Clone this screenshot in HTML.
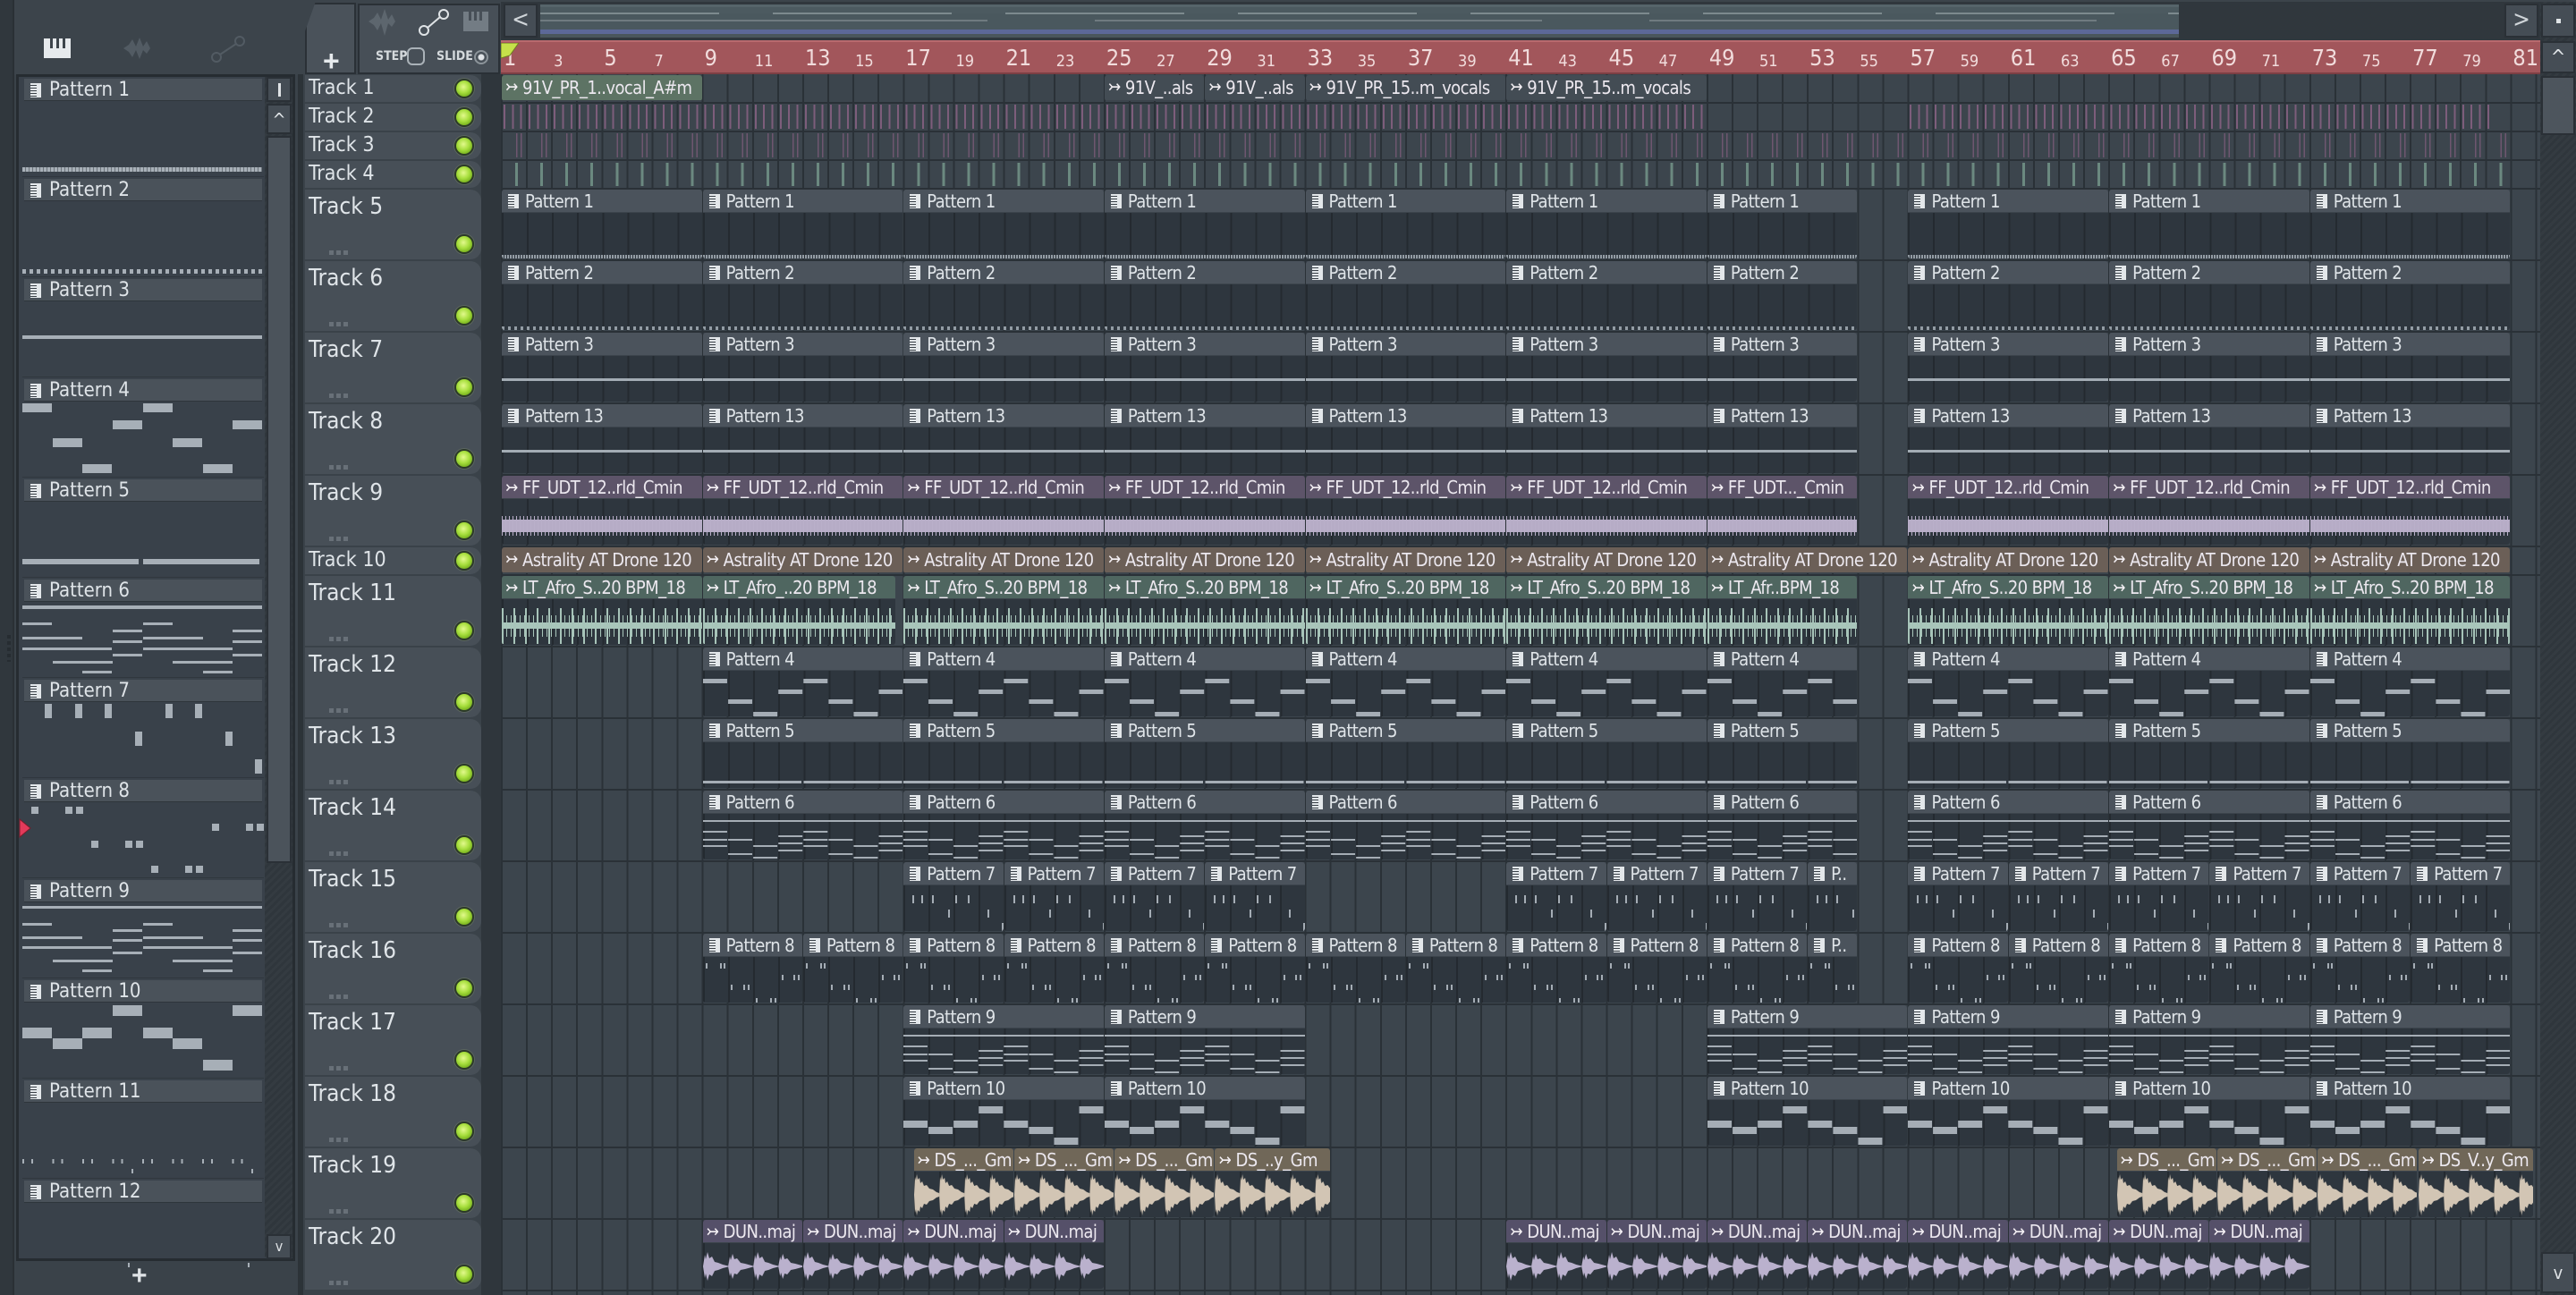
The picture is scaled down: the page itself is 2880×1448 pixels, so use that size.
<!DOCTYPE html>
<html><head><meta charset="utf-8">
<style>
*{box-sizing:border-box}
body{margin:0;width:2880px;height:1448px;overflow:hidden;background:#3a4249;position:relative;font-family:"Liberation Sans Narrow","DejaVu Sans Condensed","Liberation Sans",sans-serif;font-stretch:condensed;color:#dfe4e8}
.a0{position:absolute}
#top{position:absolute;left:0;top:0;width:2880px;height:84px;background:#3c444b}
#lstrip{position:absolute;left:0;top:0;width:16px;height:1448px;background:#30373d;border-right:2px solid #2a3035}
#plist{position:absolute;left:18px;top:83px;width:312px;height:1327px;background:#39414a;border:3px solid #262c31}
.ph{position:absolute;left:6px;width:266px;height:25px;background:#4a525a;border-bottom:1px solid #2e353b;font-size:22px;line-height:25px;padding-left:28px;color:#dfe4e8;white-space:nowrap}
.ph::before,.h::before{content:"";position:absolute;left:7px;top:5px;width:12px;height:16px;background:#e3e7ea;background-image:repeating-linear-gradient(180deg,transparent 0 2px,#3a4148 2px 3px);background-size:7px 100%;background-repeat:no-repeat}
.pv{position:absolute;left:4px;width:270px;height:84px;border-bottom:1px solid #30373e}
.pv i{position:absolute;background:#a7afb7;display:block}
#sb{position:absolute;left:296px;top:86px;width:31px;height:1320px;background:repeating-linear-gradient(135deg,#2f363c 0 3px,#343b41 3px 6px)}
.tr{position:absolute;left:341px;width:197px;background:#474f57;border-radius:0 12px 12px 0;font-size:23px;line-height:28px;padding-left:4px;white-space:nowrap}
.tr.t{font-size:26px;line-height:34px;padding-top:2px}
.led{position:absolute;right:8px;width:22px;height:22px;border-radius:50%;background:radial-gradient(circle at 45% 40%,#e2f98c 0,#a6de3c 45%,#6aa416 85%);border:2px solid #2c3a28;box-shadow:0 0 0 1px #5c6660}
.dots{position:absolute;left:27px;top:68px;width:21px;height:5px;background:repeating-linear-gradient(90deg,#687078 0 5px,transparent 5px 8px)}
#pl{position:absolute;left:560px;top:83px;width:2280px;height:1365px;overflow:hidden;background:repeating-linear-gradient(90deg,#2a3137 0 2px,#3c454d 2px 28.08px)}
.rw{position:absolute;left:0;width:2280px;height:2px;background:#2a3137}
.c{position:absolute;left:calc(var(--b)*28.08px + 1px);width:calc(var(--w)*28.08px - 1px);border-radius:3px;overflow:hidden;background-color:#2e363e;--g:repeating-linear-gradient(90deg,#242a30 0 2px,transparent 2px 28.08px);background-image:var(--g)}
.h{position:relative;height:26px;background:#4b535c;color:#dfe4e8;font-size:20px;letter-spacing:-0.6px;line-height:26px;white-space:nowrap;overflow:hidden;padding-left:26px;border-bottom:1px solid #3c444c}
.a .h::before{content:"\21A3";background:none;color:#f4f0f4;font-size:19px;line-height:24px;top:1px;left:4px;width:auto;height:auto}
.a .h{padding-left:23px;color:#ece8ef}
.s{height:29px}.s .h{height:29px;line-height:29px}
.y1{top:1px}.y10{top:529px}
.y5{top:129px}.y6{top:209px}.y7{top:289px}.y8{top:369px}.y9{top:449px}.y11{top:561px}.y12{top:641px}.y13{top:721px}.y14{top:801px}.y15{top:881px}.y16{top:961px}.y17{top:1041px}.y18{top:1121px}.y19{top:1201px}.y20{top:1281px}
.y5,.y6,.y7,.y8,.y9,.y11,.y12,.y13,.y14,.y15,.y16,.y17,.y18,.y19,.y20{height:77px}
.gr .h{background:#5d7364}.dk .h{background:#434c54}
.pu .h{background:#5d5469}.br .h{background:#6b5f57}.tl .h{background:#4f6660}.bg .h{background:#706758}.lv .h{background:#555069}
.p1{background-image:repeating-linear-gradient(90deg,#939ca4 0 2px,transparent 2px 3px),var(--g);background-size:100% 4px,auto;background-position:0 73px,0 0;background-repeat:no-repeat,repeat}
.p2{background-image:repeating-linear-gradient(90deg,#939ca4 0 3px,transparent 3px 7px),var(--g);background-size:100% 4px,auto;background-position:0 73px,0 0;background-repeat:no-repeat,repeat}
.p3,.p13{background-image:linear-gradient(#a3acb4,#a3acb4),var(--g);background-size:100% 3px,auto;background-position:0 51px,0 0;background-repeat:no-repeat,repeat}
.p4{--L:linear-gradient(90deg,#a5adb5 0 27px,transparent 27px);background-image:var(--L),var(--L),var(--L),var(--L),var(--g);background-size:112.32px 5px,112.32px 5px,112.32px 5px,112.32px 5px,auto;background-position:0 35px,28.08px 58px,56.16px 72px,84.24px 47px,0 0;background-repeat:repeat-x,repeat-x,repeat-x,repeat-x,repeat}
.p5{background-image:repeating-linear-gradient(90deg,#a5adb5 0 110px,transparent 110px 112.32px),var(--g);background-size:100% 3px,auto;background-position:0 69px,0 0;background-repeat:no-repeat,repeat}
.p6,.p9{--L:linear-gradient(90deg,#a5adb5 0 27px,transparent 27px);background-image:linear-gradient(#a5adb5,#a5adb5),var(--L),var(--L),var(--L),var(--L),var(--L),var(--L),var(--L),var(--L),var(--L),var(--L),var(--g);background-size:100% 2px,112.32px 2px,112.32px 2px,112.32px 2px,112.32px 2px,112.32px 2px,112.32px 2px,112.32px 2px,112.32px 2px,112.32px 2px,112.32px 2px,auto;background-position:0 33px,0 45px,0 54px,0 61px,28.08px 54px,28.08px 70px,56.16px 61px,56.16px 74px,84.24px 50px,84.24px 58px,84.24px 66px,0 0;background-repeat:no-repeat,repeat-x,repeat-x,repeat-x,repeat-x,repeat-x,repeat-x,repeat-x,repeat-x,repeat-x,repeat-x,repeat}
.p10{--L:linear-gradient(90deg,#a5adb5 0 27px,transparent 27px);background-image:var(--L),var(--L),var(--L),var(--L),var(--L),var(--L),var(--L),var(--L),var(--g);background-size:224.64px 8px,224.64px 8px,224.64px 8px,224.64px 8px,224.64px 8px,224.64px 8px,224.64px 8px,224.64px 8px,auto;background-position:0 49px,28.08px 56px,56.16px 49px,84.24px 33px,112.32px 49px,140.4px 56px,168.48px 68px,196.56px 33px,0 0;background-repeat:repeat-x,repeat-x,repeat-x,repeat-x,repeat-x,repeat-x,repeat-x,repeat-x,repeat}
.p7{--T:linear-gradient(#a5adb5,#a5adb5);background-image:var(--T),var(--T),var(--T),var(--T),var(--T),var(--T),var(--T),var(--T),var(--g);background-size:2px 9px,2px 9px,2px 9px,2px 9px,2px 9px,2px 9px,2px 9px,2px 9px,auto;background-position:10px 37px,20px 37px,32px 37px,58px 37px,72px 37px,50px 53px,94px 53px,110px 68px,0 0;background-repeat:no-repeat,no-repeat,no-repeat,no-repeat,no-repeat,no-repeat,no-repeat,no-repeat,repeat}
.p8{--T:linear-gradient(#a5adb5,#a5adb5);background-image:var(--T),var(--T),var(--T),var(--T),var(--T),var(--T),var(--T),var(--T),var(--T),var(--T),var(--T),var(--T),var(--g);background-size:2px 6px,2px 6px,2px 6px,2px 6px,2px 6px,2px 6px,2px 6px,2px 6px,2px 6px,2px 6px,2px 6px,2px 6px,auto;background-position:3px 33px,19px 33px,23px 33px,31px 57px,45px 57px,50px 57px,59px 72px,75px 72px,80px 72px,88px 46px,101px 46px,106px 46px,0 0;background-repeat:no-repeat,no-repeat,no-repeat,no-repeat,no-repeat,no-repeat,no-repeat,no-repeat,no-repeat,no-repeat,no-repeat,no-repeat,repeat}
.wpu{background-image:repeating-linear-gradient(90deg,#b9afc9 0 1px,transparent 1px 4px),linear-gradient(#b6acc6,#b6acc6),var(--g);background-size:100% 22px,100% 14px,auto;background-position:0 45px,0 49px,0 0;background-repeat:no-repeat,no-repeat,repeat}
.wtl{background-image:repeating-linear-gradient(90deg,#a7c4b9 0 2px,transparent 2px 13px),repeating-linear-gradient(90deg,#a7c4b9 0 1px,transparent 1px 5px),linear-gradient(#a9c6bb,#a9c6bb),var(--g);background-size:100% 40px,100% 24px,100% 7px,auto;background-position:0 36px,0 44px,0 52px,0 0;background-repeat:no-repeat,no-repeat,no-repeat,repeat}
.wv{position:absolute;left:0;top:27px}
.rn{position:absolute;top:0;left:calc(var(--n)*56.16px + 3px);font-size:18px;line-height:36px;color:#f1dcdc;padding-top:4px}
.rn.b{font-size:25px;padding-top:0}
</style></head><body>
<svg width="0" height="0" style="position:absolute"><defs>
<pattern id="ds" width="28.08" height="50" patternUnits="userSpaceOnUse"><path d="M0 25 L1 5 L2 9 L3 2 L4 8 L6 6 L7 12 L9 10 L11 15 L14 14 L17 18 L21 19 L25 22 L28 23 L28 27 L25 28 L21 31 L17 32 L14 36 L11 35 L9 40 L7 38 L6 44 L4 42 L3 48 L2 41 L1 45 Z" fill="#d2c5b4"/></pattern>
<pattern id="dun" width="56.16" height="50" patternUnits="userSpaceOnUse"><path d="M0 25 L2 12 L3 17 L5 9 L7 16 L10 14 L13 20 L17 21 L22 23 L28 24.5 L28 25.5 L22 27 L17 29 L13 30 L10 36 L7 34 L5 41 L3 33 L2 38 Z M28 25 L30 14 L31 18 L33 11 L35 17 L38 16 L42 21 L47 22 L56 24.5 L56 25.5 L47 28 L42 29 L38 34 L35 33 L33 39 L31 32 L30 36 Z" fill="#bab1cd"/></pattern>
</defs></svg>

<div id="top"></div>
<div id="lstrip"></div>
<svg class="a0" style="left:46px;top:40px" width="240" height="30">
<rect x="3" y="3" width="30" height="22" fill="#e6eaed"/><rect x="10" y="3" width="3" height="11" fill="#3c444b"/><rect x="17" y="3" width="3" height="11" fill="#3c444b"/><rect x="24" y="3" width="3" height="11" fill="#3c444b"/>
<path d="M92 14 L98 10 L102 4 L106 12 L110 2 L114 12 L118 6 L122 14 L118 20 L114 16 L110 26 L106 16 L102 24 L98 18 Z" fill="#525b63"/>
<circle cx="196" cy="24" r="5" fill="none" stroke="#525b63" stroke-width="2"/><circle cx="222" cy="6" r="5" fill="none" stroke="#525b63" stroke-width="2"/><line x1="200" y1="21" x2="218" y2="9" stroke="#525b63" stroke-width="2"/>
</svg>
<div class="a0" style="left:341px;top:3px;width:57px;height:80px;background:#4a525a;border:2px solid #2a3036;border-radius:12px 0 0 0;clip-path:polygon(20% 0,100% 0,100% 100%,0 100%,0 40%)"></div>
<div class="a0" style="left:361px;top:50px;font-size:32px;font-weight:bold;color:#e6eaed;font-family:'Liberation Sans',sans-serif">+</div>
<div class="a0" style="left:400px;top:4px;width:159px;height:79px;background:#474f57;border:2px solid #2a3036"></div>
<svg class="a0" style="left:408px;top:8px" width="150" height="34">
<path d="M4 16 L10 12 L14 6 L18 14 L22 2 L26 14 L30 8 L34 16 L30 22 L26 18 L22 32 L18 18 L14 26 L10 20 Z" fill="#5d666e"/>
<circle cx="66" cy="26" r="5" fill="none" stroke="#dfe3e6" stroke-width="2"/><circle cx="88" cy="8" r="5" fill="none" stroke="#dfe3e6" stroke-width="2"/><line x1="70" y1="23" x2="84" y2="11" stroke="#dfe3e6" stroke-width="2"/>
<rect x="110" y="5" width="28" height="22" fill="#737c84"/><rect x="116" y="5" width="3" height="10" fill="#474f57"/><rect x="122" y="5" width="3" height="10" fill="#474f57"/><rect x="128" y="5" width="3" height="10" fill="#474f57"/>
</svg>
<div class="a0" style="left:420px;top:55px;font-size:14px;font-weight:bold;color:#d5dadd">STEP</div>
<div class="a0" style="left:455px;top:53px;width:20px;height:20px;border:2px solid #aab2b8;border-radius:6px"></div>
<div class="a0" style="left:488px;top:55px;font-size:14px;font-weight:bold;color:#d5dadd">SLIDE</div>
<div class="a0" style="left:530px;top:56px;width:16px;height:16px;border:2px solid #8c949a;border-radius:50%;background:radial-gradient(circle,#dfe3e6 0 3px,transparent 4px)"></div>
<div class="a0" style="left:560px;top:2px;width:2280px;height:44px;background:#30373d"></div>
<div class="a0" style="left:563px;top:4px;width:38px;height:38px;background:#454d55;border:2px solid #2a3036;font-size:26px;line-height:32px;text-align:center;color:#d0d5d9">&lt;</div>
<div class="a0" style="left:604px;top:5px;width:1832px;height:37px;background:linear-gradient(180deg,#56646a 0 3px,#4c5a60 3px 10px,#4a585e 10px 28px,#5c6898 28px 33px,#4a565c 33px)"></div>
<div class="a0" style="left:604px;top:14px;width:1832px;height:2px;background:repeating-linear-gradient(90deg,#7d8a8e 0 200px,transparent 200px 260px)"></div>
<div class="a0" style="left:604px;top:22px;width:1832px;height:2px;background:repeating-linear-gradient(90deg,#6f7b80 0 500px,transparent 500px 620px)"></div>
<div class="a0" style="left:2800px;top:4px;width:38px;height:38px;background:#454d55;border:2px solid #2a3036;font-size:26px;line-height:32px;text-align:center;color:#d0d5d9">&gt;</div>
<div class="a0" style="left:2840px;top:2px;width:40px;height:1446px;background:repeating-linear-gradient(135deg,#2f363c 0 3px,#343b41 3px 6px)"></div>
<div class="a0" style="left:2841px;top:4px;width:38px;height:38px;background:#454d55;border:2px solid #2a3036"><div class="a0" style="left:15px;top:15px;width:5px;height:5px;background:#dfe3e6"></div></div>
<div class="a0" style="left:2841px;top:46px;width:38px;height:36px;background:#454d55;border:2px solid #2a3036;font-size:22px;line-height:34px;text-align:center;color:#dfe3e6">^</div>
<div class="a0" style="left:2841px;top:85px;width:38px;height:66px;background:#4d555d;border:2px solid #2a3036"></div>
<div class="a0" style="left:2841px;top:1400px;width:38px;height:46px;background:#454d55;border:2px solid #2a3036;font-size:20px;line-height:42px;text-align:center;color:#dfe3e6">v</div>
<div class="a0" style="left:560px;top:45px;width:2280px;height:38px;background:#a2565b;border-top:2px solid #b86a6e;border-bottom:2px solid #7d3f44">
<span class="rn b" style="--n:0">1</span><span class="rn" style="--n:1">3</span><span class="rn b" style="--n:2">5</span><span class="rn" style="--n:3">7</span><span class="rn b" style="--n:4">9</span><span class="rn" style="--n:5">11</span><span class="rn b" style="--n:6">13</span><span class="rn" style="--n:7">15</span><span class="rn b" style="--n:8">17</span><span class="rn" style="--n:9">19</span><span class="rn b" style="--n:10">21</span><span class="rn" style="--n:11">23</span><span class="rn b" style="--n:12">25</span><span class="rn" style="--n:13">27</span><span class="rn b" style="--n:14">29</span><span class="rn" style="--n:15">31</span><span class="rn b" style="--n:16">33</span><span class="rn" style="--n:17">35</span><span class="rn b" style="--n:18">37</span><span class="rn" style="--n:19">39</span><span class="rn b" style="--n:20">41</span><span class="rn" style="--n:21">43</span><span class="rn b" style="--n:22">45</span><span class="rn" style="--n:23">47</span><span class="rn b" style="--n:24">49</span><span class="rn" style="--n:25">51</span><span class="rn b" style="--n:26">53</span><span class="rn" style="--n:27">55</span><span class="rn b" style="--n:28">57</span><span class="rn" style="--n:29">59</span><span class="rn b" style="--n:30">61</span><span class="rn" style="--n:31">63</span><span class="rn b" style="--n:32">65</span><span class="rn" style="--n:33">67</span><span class="rn b" style="--n:34">69</span><span class="rn" style="--n:35">71</span><span class="rn b" style="--n:36">73</span><span class="rn" style="--n:37">75</span><span class="rn b" style="--n:38">77</span><span class="rn" style="--n:39">79</span><span class="rn b" style="--n:40">81</span>
<svg class="a0" style="left:0;top:1px" width="22" height="18"><path d="M0 0 L20 0 L10 14 L0 17 Z" fill="#c6e04a" stroke="#6d7d20" stroke-width="1"/></svg>
</div>

<div id="plist">
<div class="ph" style="top:2px">Pattern 1</div>
<div class="pv" style="top:28px"><i style="left:0;top:73px;width:268px;height:5px;background:repeating-linear-gradient(90deg,#a7afb7 0 3px,#6d757c 3px 4px)"></i></div>
<div class="ph" style="top:114px">Pattern 2</div>
<div class="pv" style="top:140px"><i style="left:0;top:75px;width:268px;height:5px;background:repeating-linear-gradient(90deg,#a7afb7 0 4px,transparent 4px 8px)"></i></div>
<div class="ph" style="top:226px">Pattern 3</div>
<div class="pv" style="top:252px"><i style="left:0;top:37px;width:268px;height:4px"></i></div>
<div class="ph" style="top:338px">Pattern 4</div>
<div class="pv" style="top:364px"><i style="left:0;top:1px;width:33px;height:10px"></i><i style="left:34px;top:40px;width:33px;height:10px"></i><i style="left:67px;top:69px;width:33px;height:10px"></i><i style="left:101px;top:20px;width:33px;height:10px"></i><i style="left:135px;top:1px;width:33px;height:10px"></i><i style="left:168px;top:40px;width:33px;height:10px"></i><i style="left:202px;top:69px;width:33px;height:10px"></i><i style="left:235px;top:20px;width:33px;height:10px"></i></div>
<div class="ph" style="top:450px">Pattern 5</div>
<div class="pv" style="top:476px"><i style="left:0;top:63px;width:130px;height:6px"></i><i style="left:135px;top:63px;width:130px;height:6px"></i></div>
<div class="ph" style="top:562px">Pattern 6</div>
<div class="pv" style="top:588px"><i style="left:0;top:3px;width:268px;height:4px"></i><i style="left:0;top:22px;width:33px;height:3px"></i><i style="left:135px;top:22px;width:33px;height:3px"></i><i style="left:0;top:38px;width:67px;height:3px"></i><i style="left:135px;top:38px;width:67px;height:3px"></i><i style="left:0;top:50px;width:100px;height:3px"></i><i style="left:135px;top:50px;width:100px;height:3px"></i><i style="left:101px;top:30px;width:33px;height:3px"></i><i style="left:101px;top:42px;width:33px;height:3px"></i><i style="left:101px;top:57px;width:33px;height:3px"></i><i style="left:235px;top:30px;width:33px;height:3px"></i><i style="left:235px;top:42px;width:33px;height:3px"></i><i style="left:235px;top:57px;width:33px;height:3px"></i><i style="left:34px;top:65px;width:67px;height:3px"></i><i style="left:168px;top:65px;width:67px;height:3px"></i><i style="left:67px;top:76px;width:33px;height:3px"></i><i style="left:202px;top:76px;width:33px;height:3px"></i></div>
<div class="ph" style="top:674px">Pattern 7</div>
<div class="pv" style="top:700px"><i style="left:25px;top:1px;width:8px;height:16px"></i><i style="left:59px;top:1px;width:8px;height:16px"></i><i style="left:92px;top:1px;width:8px;height:16px"></i><i style="left:160px;top:1px;width:8px;height:16px"></i><i style="left:193px;top:1px;width:8px;height:16px"></i><i style="left:126px;top:32px;width:8px;height:16px"></i><i style="left:227px;top:32px;width:8px;height:16px"></i><i style="left:260px;top:63px;width:8px;height:16px"></i></div>
<div class="ph" style="top:786px">Pattern 8</div>
<div class="pv" style="top:812px"><i style="left:10px;top:4px;width:8px;height:8px"></i><i style="left:48px;top:4px;width:8px;height:8px"></i><i style="left:60px;top:4px;width:8px;height:8px"></i><i style="left:212px;top:23px;width:8px;height:8px"></i><i style="left:250px;top:23px;width:8px;height:8px"></i><i style="left:262px;top:23px;width:8px;height:8px"></i><i style="left:77px;top:42px;width:8px;height:8px"></i><i style="left:115px;top:42px;width:8px;height:8px"></i><i style="left:127px;top:42px;width:8px;height:8px"></i><i style="left:144px;top:70px;width:8px;height:8px"></i><i style="left:182px;top:70px;width:8px;height:8px"></i><i style="left:194px;top:70px;width:8px;height:8px"></i></div>
<div class="ph" style="top:898px">Pattern 9</div>
<div class="pv" style="top:924px"><i style="left:0;top:3px;width:268px;height:3px"></i><i style="left:0;top:22px;width:33px;height:3px"></i><i style="left:135px;top:22px;width:33px;height:3px"></i><i style="left:0;top:37px;width:67px;height:3px"></i><i style="left:135px;top:37px;width:67px;height:3px"></i><i style="left:0;top:48px;width:100px;height:3px"></i><i style="left:135px;top:48px;width:100px;height:3px"></i><i style="left:101px;top:29px;width:33px;height:3px"></i><i style="left:101px;top:40px;width:33px;height:3px"></i><i style="left:101px;top:54px;width:33px;height:3px"></i><i style="left:235px;top:29px;width:33px;height:3px"></i><i style="left:235px;top:40px;width:33px;height:3px"></i><i style="left:235px;top:54px;width:33px;height:3px"></i><i style="left:34px;top:63px;width:67px;height:3px"></i><i style="left:168px;top:63px;width:67px;height:3px"></i><i style="left:67px;top:74px;width:33px;height:3px"></i><i style="left:202px;top:74px;width:33px;height:3px"></i></div>
<div class="ph" style="top:1010px">Pattern 10</div>
<div class="pv" style="top:1036px"><i style="left:101px;top:2px;width:33px;height:12px"></i><i style="left:235px;top:2px;width:33px;height:12px"></i><i style="left:0;top:27px;width:33px;height:12px"></i><i style="left:67px;top:27px;width:33px;height:12px"></i><i style="left:135px;top:27px;width:33px;height:12px"></i><i style="left:34px;top:39px;width:33px;height:12px"></i><i style="left:168px;top:39px;width:33px;height:12px"></i><i style="left:202px;top:63px;width:33px;height:12px"></i></div>
<div class="ph" style="top:1122px">Pattern 11</div>
<div class="pv" style="top:1148px"><i style="left:0;top:62px;width:268px;height:5px;background:repeating-linear-gradient(90deg,#a7afb7 0 2px,transparent 2px 10px,#a7afb7 10px 12px,transparent 12px 33.5px)"></i><i style="left:122px;top:73px;width:2px;height:5px"></i><i style="left:256px;top:73px;width:2px;height:5px"></i></div>
<div class="ph" style="top:1234px">Pattern 12</div>
<div class="pv" style="top:1260px;border:0"><i style="left:118px;top:66px;width:2px;height:5px"></i><i style="left:252px;top:66px;width:2px;height:5px"></i></div>
</div>
<svg class="a0" style="left:20px;top:915px" width="16" height="22"><path d="M2 1 L14 11 L2 21 Z" fill="#e23a5a" stroke="#7a1a2a"/></svg>
<div id="sb"></div>
<div class="a0" style="left:298px;top:86px;width:28px;height:28px;background:#454d55;border:2px solid #2a3036"><div class="a0" style="left:11px;top:5px;width:3px;height:15px;background:#dfe3e6"></div></div>
<div class="a0" style="left:298px;top:116px;width:28px;height:34px;background:#454d55;border:2px solid #2a3036;font-size:20px;line-height:32px;text-align:center;color:#dfe3e6">^</div>
<div class="a0" style="left:298px;top:152px;width:28px;height:813px;background:#4b535b;border:2px solid #2a3036"></div>
<div class="a0" style="left:298px;top:1380px;width:28px;height:28px;background:#454d55;border:2px solid #2a3036;font-size:16px;line-height:24px;text-align:center;color:#dfe3e6">v</div>
<div class="a0" style="left:147px;top:1410px;font-size:30px;color:#dfe3e6;font-weight:bold;font-family:'Liberation Sans',sans-serif">+</div>
<div class="a0" style="left:333px;top:83px;width:6px;height:1365px;background:#2c3338"></div>
<div class="a0" style="left:8px;top:710px;width:4px;height:30px;background:repeating-linear-gradient(180deg,#262c31 0 4px,transparent 4px 7px)"></div>

<div class="a0" style="left:538px;top:83px;width:22px;height:1365px;background:#2f363c"></div>
<div class="tr" style="top:84px;height:30px">Track 1<div class="led" style="top:4px"></div></div>
<div class="tr" style="top:116px;height:30px">Track 2<div class="led" style="top:4px"></div></div>
<div class="tr" style="top:148px;height:30px">Track 3<div class="led" style="top:4px"></div></div>
<div class="tr" style="top:180px;height:30px">Track 4<div class="led" style="top:4px"></div></div>
<div class="tr t" style="top:212px;height:78px">Track 5<div class="led" style="top:50px"></div><div class="dots"></div></div>
<div class="tr t" style="top:292px;height:78px">Track 6<div class="led" style="top:50px"></div><div class="dots"></div></div>
<div class="tr t" style="top:372px;height:78px">Track 7<div class="led" style="top:50px"></div><div class="dots"></div></div>
<div class="tr t" style="top:452px;height:78px">Track 8<div class="led" style="top:50px"></div><div class="dots"></div></div>
<div class="tr t" style="top:532px;height:78px">Track 9<div class="led" style="top:50px"></div><div class="dots"></div></div>
<div class="tr" style="top:612px;height:30px">Track 10<div class="led" style="top:4px"></div></div>
<div class="tr t" style="top:644px;height:78px">Track 11<div class="led" style="top:50px"></div><div class="dots"></div></div>
<div class="tr t" style="top:724px;height:78px">Track 12<div class="led" style="top:50px"></div><div class="dots"></div></div>
<div class="tr t" style="top:804px;height:78px">Track 13<div class="led" style="top:50px"></div><div class="dots"></div></div>
<div class="tr t" style="top:884px;height:78px">Track 14<div class="led" style="top:50px"></div><div class="dots"></div></div>
<div class="tr t" style="top:964px;height:78px">Track 15<div class="led" style="top:50px"></div><div class="dots"></div></div>
<div class="tr t" style="top:1044px;height:78px">Track 16<div class="led" style="top:50px"></div><div class="dots"></div></div>
<div class="tr t" style="top:1124px;height:78px">Track 17<div class="led" style="top:50px"></div><div class="dots"></div></div>
<div class="tr t" style="top:1204px;height:78px">Track 18<div class="led" style="top:50px"></div><div class="dots"></div></div>
<div class="tr t" style="top:1284px;height:78px">Track 19<div class="led" style="top:50px"></div><div class="dots"></div></div>
<div class="tr t" style="top:1364px;height:78px">Track 20<div class="led" style="top:50px"></div><div class="dots"></div></div>

<div id="pl">
<div class="rw" style="top:31px"></div><div class="rw" style="top:63px"></div><div class="rw" style="top:95px"></div><div class="rw" style="top:127px"></div><div class="rw" style="top:207px"></div><div class="rw" style="top:287px"></div><div class="rw" style="top:367px"></div><div class="rw" style="top:447px"></div><div class="rw" style="top:527px"></div><div class="rw" style="top:559px"></div><div class="rw" style="top:639px"></div><div class="rw" style="top:719px"></div><div class="rw" style="top:799px"></div><div class="rw" style="top:879px"></div><div class="rw" style="top:959px"></div><div class="rw" style="top:1039px"></div><div class="rw" style="top:1119px"></div><div class="rw" style="top:1199px"></div><div class="rw" style="top:1279px"></div><div class="rw" style="top:1359px"></div>
<div class="a0" style="left:0;top:34px;width:1348px;height:27px;background:repeating-linear-gradient(90deg,transparent 0 3px,#7d5d7b 3px 5px,transparent 5px 9.36px)"></div>
<div class="a0" style="left:1572px;top:34px;width:658px;height:27px;background:repeating-linear-gradient(90deg,transparent 0 3px,#7d5d7b 3px 5px,transparent 5px 9.36px)"></div>
<div class="a0" style="left:0;top:66px;width:2250px;height:27px;background:repeating-linear-gradient(90deg,transparent 0 17px,#6e5670 17px 18.5px,transparent 18.5px 22px,#6e5670 22px 23.5px,transparent 23.5px 28.08px)"></div>
<div class="a0" style="left:0;top:99px;width:2250px;height:26px;background:repeating-linear-gradient(90deg,transparent 0 16px,#6b8980 16px 19px,transparent 19px 28.08px)"></div>
<div class="c s y1 a gr" style="--b:0;--w:8"><div class="h">91V_PR_1..vocal_A#m</div></div>
<div class="c s y1 a dk" style="--b:24;--w:4"><div class="h">91V_..als</div></div>
<div class="c s y1 a dk" style="--b:28;--w:4"><div class="h">91V_..als</div></div>
<div class="c s y1 a dk" style="--b:32;--w:8"><div class="h">91V_PR_15..m_vocals</div></div>
<div class="c s y1 a dk" style="--b:40;--w:8"><div class="h">91V_PR_15..m_vocals</div></div>
<div class="c y5 p1" style="--b:0;--w:8"><div class="h">Pattern 1</div></div><div class="c y5 p1" style="--b:8;--w:8"><div class="h">Pattern 1</div></div><div class="c y5 p1" style="--b:16;--w:8"><div class="h">Pattern 1</div></div><div class="c y5 p1" style="--b:24;--w:8"><div class="h">Pattern 1</div></div><div class="c y5 p1" style="--b:32;--w:8"><div class="h">Pattern 1</div></div><div class="c y5 p1" style="--b:40;--w:8"><div class="h">Pattern 1</div></div><div class="c y5 p1" style="--b:48;--w:6"><div class="h">Pattern 1</div></div><div class="c y5 p1" style="--b:56;--w:8"><div class="h">Pattern 1</div></div><div class="c y5 p1" style="--b:64;--w:8"><div class="h">Pattern 1</div></div><div class="c y5 p1" style="--b:72;--w:8"><div class="h">Pattern 1</div></div>
<div class="c y6 p2" style="--b:0;--w:8"><div class="h">Pattern 2</div></div><div class="c y6 p2" style="--b:8;--w:8"><div class="h">Pattern 2</div></div><div class="c y6 p2" style="--b:16;--w:8"><div class="h">Pattern 2</div></div><div class="c y6 p2" style="--b:24;--w:8"><div class="h">Pattern 2</div></div><div class="c y6 p2" style="--b:32;--w:8"><div class="h">Pattern 2</div></div><div class="c y6 p2" style="--b:40;--w:8"><div class="h">Pattern 2</div></div><div class="c y6 p2" style="--b:48;--w:6"><div class="h">Pattern 2</div></div><div class="c y6 p2" style="--b:56;--w:8"><div class="h">Pattern 2</div></div><div class="c y6 p2" style="--b:64;--w:8"><div class="h">Pattern 2</div></div><div class="c y6 p2" style="--b:72;--w:8"><div class="h">Pattern 2</div></div>
<div class="c y7 p3" style="--b:0;--w:8"><div class="h">Pattern 3</div></div><div class="c y7 p3" style="--b:8;--w:8"><div class="h">Pattern 3</div></div><div class="c y7 p3" style="--b:16;--w:8"><div class="h">Pattern 3</div></div><div class="c y7 p3" style="--b:24;--w:8"><div class="h">Pattern 3</div></div><div class="c y7 p3" style="--b:32;--w:8"><div class="h">Pattern 3</div></div><div class="c y7 p3" style="--b:40;--w:8"><div class="h">Pattern 3</div></div><div class="c y7 p3" style="--b:48;--w:6"><div class="h">Pattern 3</div></div><div class="c y7 p3" style="--b:56;--w:8"><div class="h">Pattern 3</div></div><div class="c y7 p3" style="--b:64;--w:8"><div class="h">Pattern 3</div></div><div class="c y7 p3" style="--b:72;--w:8"><div class="h">Pattern 3</div></div>
<div class="c y8 p13" style="--b:0;--w:8"><div class="h">Pattern 13</div></div><div class="c y8 p13" style="--b:8;--w:8"><div class="h">Pattern 13</div></div><div class="c y8 p13" style="--b:16;--w:8"><div class="h">Pattern 13</div></div><div class="c y8 p13" style="--b:24;--w:8"><div class="h">Pattern 13</div></div><div class="c y8 p13" style="--b:32;--w:8"><div class="h">Pattern 13</div></div><div class="c y8 p13" style="--b:40;--w:8"><div class="h">Pattern 13</div></div><div class="c y8 p13" style="--b:48;--w:6"><div class="h">Pattern 13</div></div><div class="c y8 p13" style="--b:56;--w:8"><div class="h">Pattern 13</div></div><div class="c y8 p13" style="--b:64;--w:8"><div class="h">Pattern 13</div></div><div class="c y8 p13" style="--b:72;--w:8"><div class="h">Pattern 13</div></div>
<div class="c y9 a pu wpu" style="--b:0;--w:8"><div class="h">FF_UDT_12..rld_Cmin</div></div><div class="c y9 a pu wpu" style="--b:8;--w:8"><div class="h">FF_UDT_12..rld_Cmin</div></div><div class="c y9 a pu wpu" style="--b:16;--w:8"><div class="h">FF_UDT_12..rld_Cmin</div></div><div class="c y9 a pu wpu" style="--b:24;--w:8"><div class="h">FF_UDT_12..rld_Cmin</div></div><div class="c y9 a pu wpu" style="--b:32;--w:8"><div class="h">FF_UDT_12..rld_Cmin</div></div><div class="c y9 a pu wpu" style="--b:40;--w:8"><div class="h">FF_UDT_12..rld_Cmin</div></div><div class="c y9 a pu wpu" style="--b:48;--w:6"><div class="h">FF_UDT..._Cmin</div></div><div class="c y9 a pu wpu" style="--b:56;--w:8"><div class="h">FF_UDT_12..rld_Cmin</div></div><div class="c y9 a pu wpu" style="--b:64;--w:8"><div class="h">FF_UDT_12..rld_Cmin</div></div><div class="c y9 a pu wpu" style="--b:72;--w:8"><div class="h">FF_UDT_12..rld_Cmin</div></div>
<div class="c s y10 a br" style="--b:0;--w:8"><div class="h">Astrality AT Drone 120</div></div><div class="c s y10 a br" style="--b:8;--w:8"><div class="h">Astrality AT Drone 120</div></div><div class="c s y10 a br" style="--b:16;--w:8"><div class="h">Astrality AT Drone 120</div></div><div class="c s y10 a br" style="--b:24;--w:8"><div class="h">Astrality AT Drone 120</div></div><div class="c s y10 a br" style="--b:32;--w:8"><div class="h">Astrality AT Drone 120</div></div><div class="c s y10 a br" style="--b:40;--w:8"><div class="h">Astrality AT Drone 120</div></div><div class="c s y10 a br" style="--b:48;--w:8"><div class="h">Astrality AT Drone 120</div></div><div class="c s y10 a br" style="--b:56;--w:8"><div class="h">Astrality AT Drone 120</div></div><div class="c s y10 a br" style="--b:64;--w:8"><div class="h">Astrality AT Drone 120</div></div><div class="c s y10 a br" style="--b:72;--w:8"><div class="h">Astrality AT Drone 120</div></div>
<div class="c y11 a tl wtl" style="--b:0;--w:8"><div class="h">LT_Afro_S..20 BPM_18</div></div><div class="c y11 a tl wtl" style="--b:8;--w:7.7"><div class="h">LT_Afro_..20 BPM_18</div></div><div class="c y11 a tl wtl" style="--b:16;--w:8"><div class="h">LT_Afro_S..20 BPM_18</div></div><div class="c y11 a tl wtl" style="--b:24;--w:8"><div class="h">LT_Afro_S..20 BPM_18</div></div><div class="c y11 a tl wtl" style="--b:32;--w:8"><div class="h">LT_Afro_S..20 BPM_18</div></div><div class="c y11 a tl wtl" style="--b:40;--w:8"><div class="h">LT_Afro_S..20 BPM_18</div></div><div class="c y11 a tl wtl" style="--b:48;--w:6"><div class="h">LT_Afr..BPM_18</div></div><div class="c y11 a tl wtl" style="--b:56;--w:8"><div class="h">LT_Afro_S..20 BPM_18</div></div><div class="c y11 a tl wtl" style="--b:64;--w:8"><div class="h">LT_Afro_S..20 BPM_18</div></div><div class="c y11 a tl wtl" style="--b:72;--w:8"><div class="h">LT_Afro_S..20 BPM_18</div></div>
<div class="c y12 p4" style="--b:8;--w:8"><div class="h">Pattern 4</div></div><div class="c y12 p4" style="--b:16;--w:8"><div class="h">Pattern 4</div></div><div class="c y12 p4" style="--b:24;--w:8"><div class="h">Pattern 4</div></div><div class="c y12 p4" style="--b:32;--w:8"><div class="h">Pattern 4</div></div><div class="c y12 p4" style="--b:40;--w:8"><div class="h">Pattern 4</div></div><div class="c y12 p4" style="--b:48;--w:6"><div class="h">Pattern 4</div></div><div class="c y12 p4" style="--b:56;--w:8"><div class="h">Pattern 4</div></div><div class="c y12 p4" style="--b:64;--w:8"><div class="h">Pattern 4</div></div><div class="c y12 p4" style="--b:72;--w:8"><div class="h">Pattern 4</div></div>
<div class="c y13 p5" style="--b:8;--w:8"><div class="h">Pattern 5</div></div><div class="c y13 p5" style="--b:16;--w:8"><div class="h">Pattern 5</div></div><div class="c y13 p5" style="--b:24;--w:8"><div class="h">Pattern 5</div></div><div class="c y13 p5" style="--b:32;--w:8"><div class="h">Pattern 5</div></div><div class="c y13 p5" style="--b:40;--w:8"><div class="h">Pattern 5</div></div><div class="c y13 p5" style="--b:48;--w:6"><div class="h">Pattern 5</div></div><div class="c y13 p5" style="--b:56;--w:8"><div class="h">Pattern 5</div></div><div class="c y13 p5" style="--b:64;--w:8"><div class="h">Pattern 5</div></div><div class="c y13 p5" style="--b:72;--w:8"><div class="h">Pattern 5</div></div>
<div class="c y14 p6" style="--b:8;--w:8"><div class="h">Pattern 6</div></div><div class="c y14 p6" style="--b:16;--w:8"><div class="h">Pattern 6</div></div><div class="c y14 p6" style="--b:24;--w:8"><div class="h">Pattern 6</div></div><div class="c y14 p6" style="--b:32;--w:8"><div class="h">Pattern 6</div></div><div class="c y14 p6" style="--b:40;--w:8"><div class="h">Pattern 6</div></div><div class="c y14 p6" style="--b:48;--w:6"><div class="h">Pattern 6</div></div><div class="c y14 p6" style="--b:56;--w:8"><div class="h">Pattern 6</div></div><div class="c y14 p6" style="--b:64;--w:8"><div class="h">Pattern 6</div></div><div class="c y14 p6" style="--b:72;--w:8"><div class="h">Pattern 6</div></div>
<div class="c y15 p7" style="--b:16;--w:4"><div class="h">Pattern 7</div></div><div class="c y15 p7" style="--b:20;--w:4"><div class="h">Pattern 7</div></div><div class="c y15 p7" style="--b:24;--w:4"><div class="h">Pattern 7</div></div><div class="c y15 p7" style="--b:28;--w:4"><div class="h">Pattern 7</div></div><div class="c y15 p7" style="--b:40;--w:4"><div class="h">Pattern 7</div></div><div class="c y15 p7" style="--b:44;--w:4"><div class="h">Pattern 7</div></div><div class="c y15 p7" style="--b:48;--w:4"><div class="h">Pattern 7</div></div><div class="c y15 p7" style="--b:52;--w:2"><div class="h">P..</div></div><div class="c y15 p7" style="--b:56;--w:4"><div class="h">Pattern 7</div></div><div class="c y15 p7" style="--b:60;--w:4"><div class="h">Pattern 7</div></div><div class="c y15 p7" style="--b:64;--w:4"><div class="h">Pattern 7</div></div><div class="c y15 p7" style="--b:68;--w:4"><div class="h">Pattern 7</div></div><div class="c y15 p7" style="--b:72;--w:4"><div class="h">Pattern 7</div></div><div class="c y15 p7" style="--b:76;--w:4"><div class="h">Pattern 7</div></div>
<div class="c y16 p8" style="--b:8;--w:4"><div class="h">Pattern 8</div></div><div class="c y16 p8" style="--b:12;--w:4"><div class="h">Pattern 8</div></div><div class="c y16 p8" style="--b:16;--w:4"><div class="h">Pattern 8</div></div><div class="c y16 p8" style="--b:20;--w:4"><div class="h">Pattern 8</div></div><div class="c y16 p8" style="--b:24;--w:4"><div class="h">Pattern 8</div></div><div class="c y16 p8" style="--b:28;--w:4"><div class="h">Pattern 8</div></div><div class="c y16 p8" style="--b:32;--w:4"><div class="h">Pattern 8</div></div><div class="c y16 p8" style="--b:36;--w:4"><div class="h">Pattern 8</div></div><div class="c y16 p8" style="--b:40;--w:4"><div class="h">Pattern 8</div></div><div class="c y16 p8" style="--b:44;--w:4"><div class="h">Pattern 8</div></div><div class="c y16 p8" style="--b:48;--w:4"><div class="h">Pattern 8</div></div><div class="c y16 p8" style="--b:52;--w:2"><div class="h">P..</div></div><div class="c y16 p8" style="--b:56;--w:4"><div class="h">Pattern 8</div></div><div class="c y16 p8" style="--b:60;--w:4"><div class="h">Pattern 8</div></div><div class="c y16 p8" style="--b:64;--w:4"><div class="h">Pattern 8</div></div><div class="c y16 p8" style="--b:68;--w:4"><div class="h">Pattern 8</div></div><div class="c y16 p8" style="--b:72;--w:4"><div class="h">Pattern 8</div></div><div class="c y16 p8" style="--b:76;--w:4"><div class="h">Pattern 8</div></div>
<div class="c y17 p9" style="--b:16;--w:8"><div class="h">Pattern 9</div></div><div class="c y17 p9" style="--b:24;--w:8"><div class="h">Pattern 9</div></div><div class="c y17 p9" style="--b:48;--w:8"><div class="h">Pattern 9</div></div><div class="c y17 p9" style="--b:56;--w:8"><div class="h">Pattern 9</div></div><div class="c y17 p9" style="--b:64;--w:8"><div class="h">Pattern 9</div></div><div class="c y17 p9" style="--b:72;--w:8"><div class="h">Pattern 9</div></div>
<div class="c y18 p10" style="--b:16;--w:8"><div class="h">Pattern 10</div></div><div class="c y18 p10" style="--b:24;--w:8"><div class="h">Pattern 10</div></div><div class="c y18 p10" style="--b:48;--w:8"><div class="h">Pattern 10</div></div><div class="c y18 p10" style="--b:56;--w:8"><div class="h">Pattern 10</div></div><div class="c y18 p10" style="--b:64;--w:8"><div class="h">Pattern 10</div></div><div class="c y18 p10" style="--b:72;--w:8"><div class="h">Pattern 10</div></div>
<div class="c y19 a bg" style="--b:16.4;--w:4"><div class="h">DS_..._Gm</div><svg class="wv" width="112" height="50"><rect width="112" height="50" fill="url(#ds)"/></svg></div>
<div class="c y19 a bg" style="--b:20.4;--w:4"><div class="h">DS_..._Gm</div><svg class="wv" width="112" height="50"><rect width="112" height="50" fill="url(#ds)"/></svg></div>
<div class="c y19 a bg" style="--b:24.4;--w:4"><div class="h">DS_..._Gm</div><svg class="wv" width="112" height="50"><rect width="112" height="50" fill="url(#ds)"/></svg></div>
<div class="c y19 a bg" style="--b:28.4;--w:4.6"><div class="h">DS_..y_Gm</div><svg class="wv" width="130" height="50"><rect width="130" height="50" fill="url(#ds)"/></svg></div>
<div class="c y19 a bg" style="--b:64.3;--w:4"><div class="h">DS_..._Gm</div><svg class="wv" width="112" height="50"><rect width="112" height="50" fill="url(#ds)"/></svg></div>
<div class="c y19 a bg" style="--b:68.3;--w:4"><div class="h">DS_..._Gm</div><svg class="wv" width="112" height="50"><rect width="112" height="50" fill="url(#ds)"/></svg></div>
<div class="c y19 a bg" style="--b:72.3;--w:4"><div class="h">DS_..._Gm</div><svg class="wv" width="112" height="50"><rect width="112" height="50" fill="url(#ds)"/></svg></div>
<div class="c y19 a bg" style="--b:76.3;--w:4.6"><div class="h">DS_V..y_Gm</div><svg class="wv" width="130" height="50"><rect width="130" height="50" fill="url(#ds)"/></svg></div>
<div class="c y20 a lv" style="--b:8;--w:4"><div class="h">DUN..maj</div><svg class="wv" width="112" height="50"><rect width="112" height="50" fill="url(#dun)"/></svg></div>
<div class="c y20 a lv" style="--b:12;--w:4"><div class="h">DUN..maj</div><svg class="wv" width="112" height="50"><rect width="112" height="50" fill="url(#dun)"/></svg></div>
<div class="c y20 a lv" style="--b:16;--w:4"><div class="h">DUN..maj</div><svg class="wv" width="112" height="50"><rect width="112" height="50" fill="url(#dun)"/></svg></div>
<div class="c y20 a lv" style="--b:20;--w:4"><div class="h">DUN..maj</div><svg class="wv" width="112" height="50"><rect width="112" height="50" fill="url(#dun)"/></svg></div>
<div class="c y20 a lv" style="--b:40;--w:4"><div class="h">DUN..maj</div><svg class="wv" width="112" height="50"><rect width="112" height="50" fill="url(#dun)"/></svg></div>
<div class="c y20 a lv" style="--b:44;--w:4"><div class="h">DUN..maj</div><svg class="wv" width="112" height="50"><rect width="112" height="50" fill="url(#dun)"/></svg></div>
<div class="c y20 a lv" style="--b:48;--w:4"><div class="h">DUN..maj</div><svg class="wv" width="112" height="50"><rect width="112" height="50" fill="url(#dun)"/></svg></div>
<div class="c y20 a lv" style="--b:52;--w:4"><div class="h">DUN..maj</div><svg class="wv" width="112" height="50"><rect width="112" height="50" fill="url(#dun)"/></svg></div>
<div class="c y20 a lv" style="--b:56;--w:4"><div class="h">DUN..maj</div><svg class="wv" width="112" height="50"><rect width="112" height="50" fill="url(#dun)"/></svg></div>
<div class="c y20 a lv" style="--b:60;--w:4"><div class="h">DUN..maj</div><svg class="wv" width="112" height="50"><rect width="112" height="50" fill="url(#dun)"/></svg></div>
<div class="c y20 a lv" style="--b:64;--w:4"><div class="h">DUN..maj</div><svg class="wv" width="112" height="50"><rect width="112" height="50" fill="url(#dun)"/></svg></div>
<div class="c y20 a lv" style="--b:68;--w:4"><div class="h">DUN..maj</div><svg class="wv" width="112" height="50"><rect width="112" height="50" fill="url(#dun)"/></svg></div>
</div>
</body></html>
